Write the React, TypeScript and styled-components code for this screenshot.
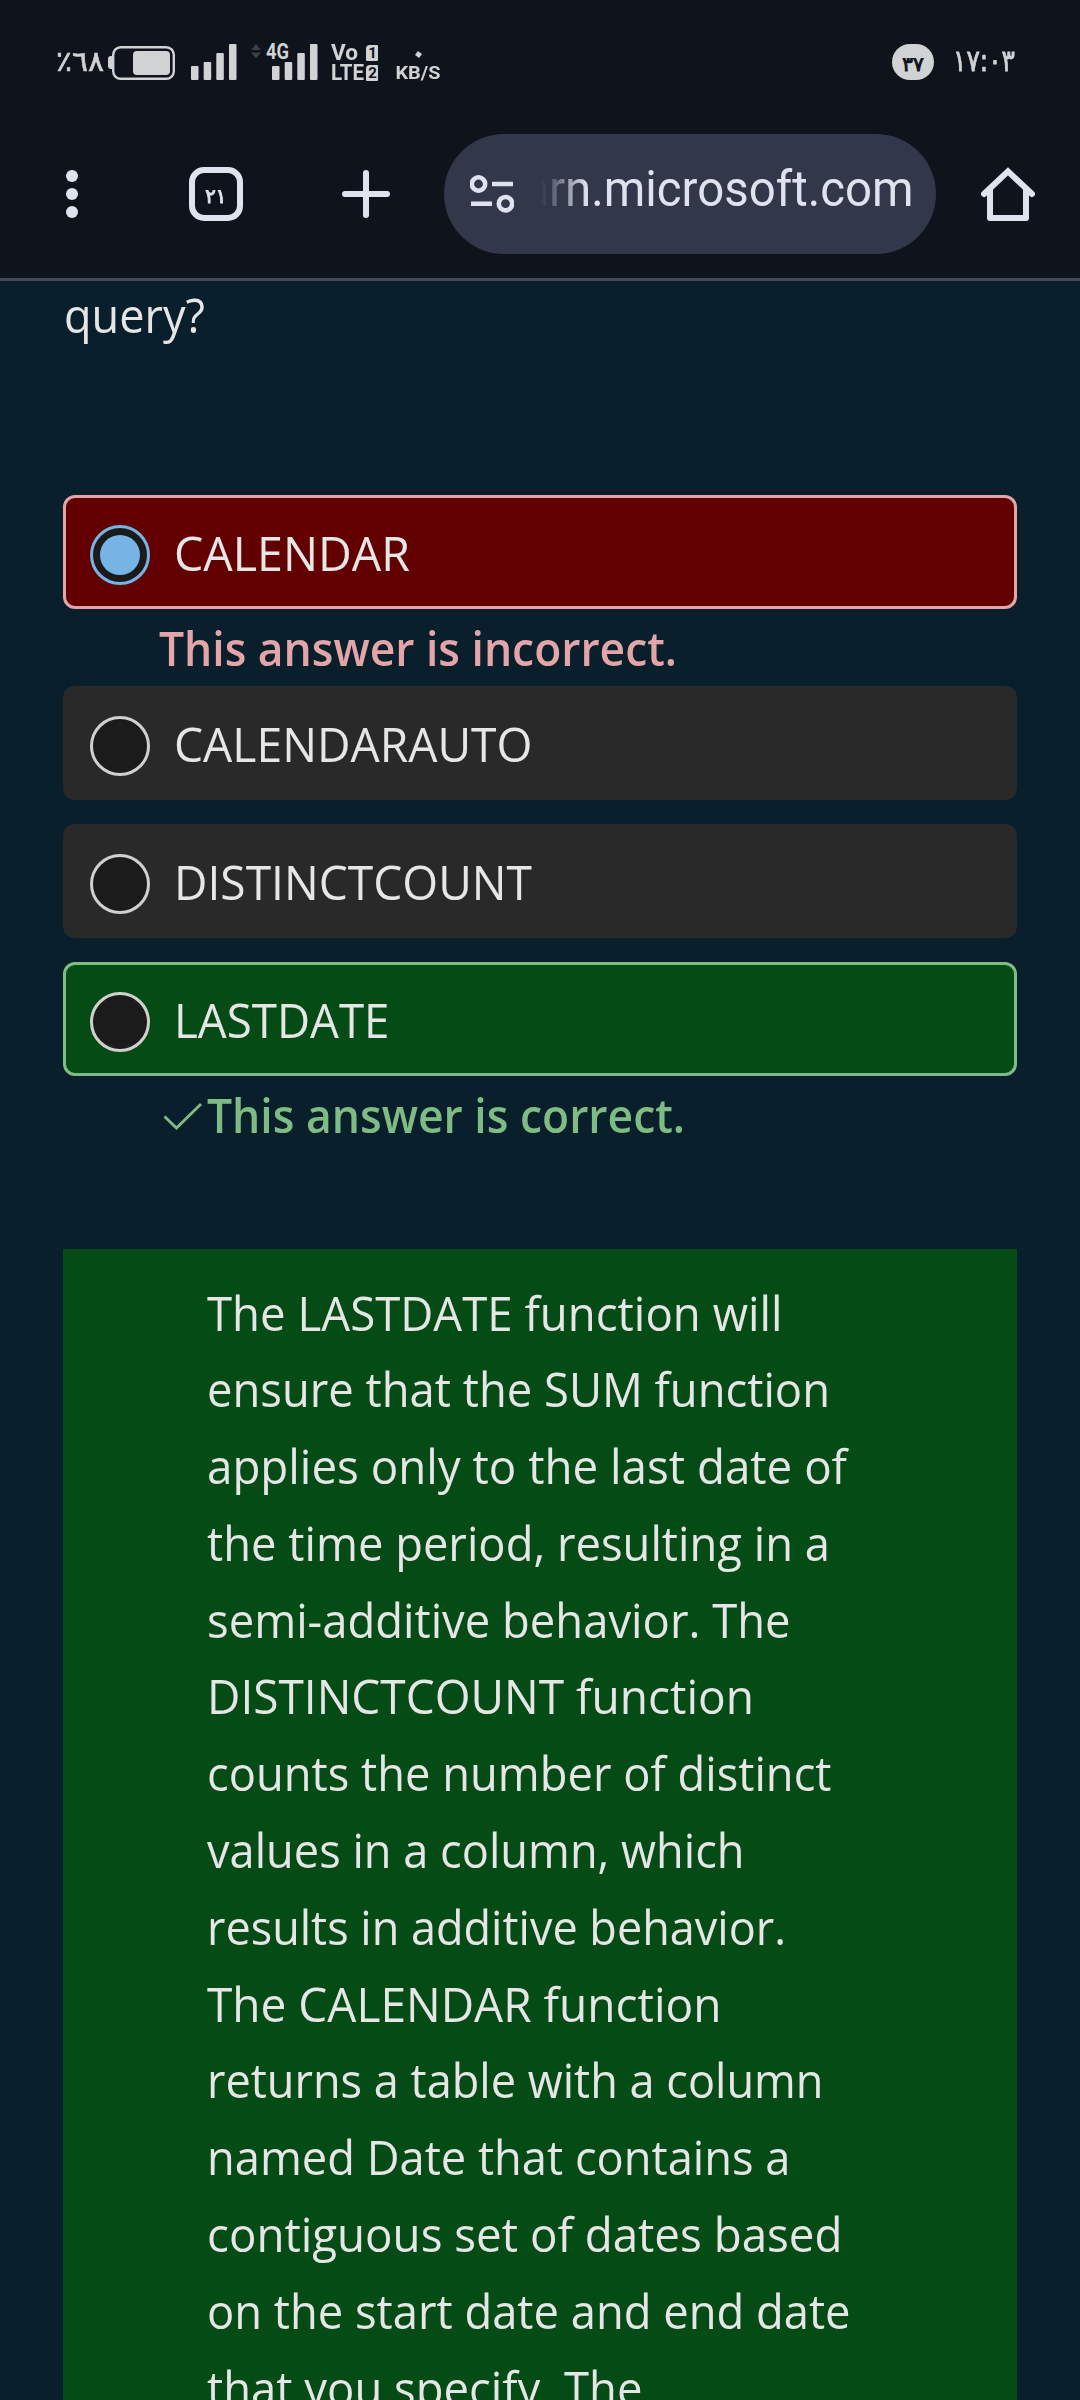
import React, { useLayoutEffect, useRef, useState } from "react";
import styled, { createGlobalStyle } from "styled-components";

const GlobalStyle = createGlobalStyle`
  html, body { margin: 0; padding: 0; background: #0a1f2c; }
  * { box-sizing: border-box; }
  svg { display: block; flex: none; }
`;

const ui = "#dfe2ef";
const status = "#d0d2d4";

const Screen = styled.div`
  width: 1080px;
  height: 2400px;
  overflow: hidden;
  background: #0a1f2c;
  color: #e6e6e6;
  font-family: "Open Sans", "Noto Sans", sans-serif;
  font-size: 47px;
  display: flex;
  flex-direction: column;
`;

const StatusBar = styled.header`
  flex: none;
  height: 124px;
  padding: 44px 65px 0 56px;
  background: #0f131b;
  color: ${status};
  display: flex;
  align-items: flex-start;
`;

const Digits = styled.span<{ $size: number; $color?: string; $stroke?: number }>`
  display: block;
  font-family: "DejaVu Sans", sans-serif;
  font-size: ${(p) => p.$size}px;
  line-height: 36px;
  color: ${(p) => p.$color ?? status};
  -webkit-text-stroke: ${(p) => p.$stroke ?? 0.6}px ${(p) => p.$color ?? status};
  direction: ltr;
  unicode-bidi: bidi-override;
  white-space: nowrap;
`;

const BatteryText = styled.div`
  width: 52px;
`;

const SignalGroup = styled.div`
  display: flex;
  flex: 1;
`;

const Volte = styled.div`
  margin-left: 13px;
  width: 46px;
  height: 37px;
  display: grid;
  grid-template-rows: 17px 17px;
  row-gap: 3px;
  font-family: Roboto, sans-serif;
  font-weight: 700;
  font-size: 22px;
  line-height: 17px;
`;

const VolteRow = styled.div`
  display: flex;
  justify-content: space-between;
  align-items: center;
`;

const SimBadge = styled.span`
  width: 12px;
  height: 16px;
  border-radius: 4px 1px 1px 1px;
  background: ${status};
  color: #0f131b;
  font-size: 15px;
  line-height: 16px;
  text-align: center;
`;

const Speed = styled.div`
  margin-left: 18px;
  width: 46px;
  display: flex;
  flex-direction: column;
  align-items: center;
  font-family: Roboto, sans-serif;
  font-weight: 700;
  font-size: 18.5px;
  line-height: 16px;
`;

const SpeedDot = styled.i`
  width: 5px;
  height: 5px;
  margin: 8px 0 8px;
  background: ${status};
  transform: rotate(35deg);
`;

const Notice = styled.div`
  width: 42px;
  height: 36px;
  border-radius: 18px;
  background: ${status};
  display: flex;
  justify-content: center;
  padding-top: 2px;
`;

const Clock = styled.div`
  margin-left: 19px;
  width: 62px;
  margin-top: -1px;
`;

const Toolbar = styled.nav`
  flex: none;
  height: 157px;
  padding: 10px 45px 0 66px;
  background: #0f131b;
  border-bottom: 3px solid #434a56;
  display: flex;
  align-items: flex-start;
`;

const Tool = styled.div<{ $w: number; $ml?: number }>`
  width: ${(p) => p.$w}px;
  height: 120px;
  margin-left: ${(p) => p.$ml ?? 0}px;
  display: flex;
  align-items: center;
  justify-content: center;
`;

const TabCount = styled.div`
  width: 54px;
  height: 54px;
  border: 6px solid ${ui};
  border-radius: 15px;
  display: flex;
  align-items: center;
  justify-content: center;
  padding-top: 3px;
`;

const Address = styled.div`
  margin-left: 54px;
  width: 492px;
  height: 120px;
  border-radius: 60px;
  background: #32374a;
  display: flex;
  align-items: center;
  padding-left: 26px;
`;

const Url = styled.div`
  margin-left: 27px;
  width: 373px;
  height: 76px;
  margin-top: -10px;
  overflow: hidden;
  display: flex;
  justify-content: flex-end;
  color: ${ui};
  font-family: Roboto, sans-serif;
  font-size: 50px;
  line-height: 76px;
  mask-image: linear-gradient(to right, transparent, #000 46px);
`;

const Content = styled.main`
  padding: 4px 63px 0;
  flex: 1;
`;

const Question = styled.p`
  margin: 0 0 150px;
  padding-left: 1px;
  line-height: 60px;
`;

const tones = {
  wrong: { bg: "#620000", line: "#e3a5a8" },
  right: { bg: "#054b16", line: "#7fbc83" },
  plain: { bg: "#292929", line: "#292929" },
};
type Tone = keyof typeof tones;

const Option = styled.div<{ $tone: Tone; $gap?: boolean }>`
  height: 114px;
  border: 3px solid ${(p) => tones[p.$tone].line};
  border-radius: 12px;
  background: ${(p) => tones[p.$tone].bg};
  padding: 27px 24px 0;
  margin-top: ${(p) => (p.$gap ? 24 : 0)}px;
  display: flex;
  gap: 24px;
`;

const Radio = styled.span<{ $on?: boolean }>`
  flex: none;
  width: 60px;
  height: 60px;
  border-radius: 50%;
  border: 3px solid ${(p) => (p.$on ? "#76b4e6" : "#d2d0ce")};
  background: #1b1b1b;
  display: flex;
  align-items: center;
  justify-content: center;
`;

const RadioDot = styled.span`
  width: 40px;
  height: 40px;
  border-radius: 50%;
  background: #76b4e6;
`;

const OptionLabel = styled.span`
  margin-top: -2px;
  line-height: 60px;
`;

const Feedback = styled.div<{ $tone: Tone }>`
  height: 77px;
  padding: 7px 0 0 96px;
  display: flex;
  font-weight: 600;
  line-height: 64px;
  color: ${(p) => tones[p.$tone].line};
`;

const Explanation = styled.section`
  margin-top: 96px;
  height: 1400px;
  padding: 25.500px 0 0 144px;
  background: #054b16;
  line-height: 76.8px;
`;

const Line = styled.div`
  height: 76.8px;
`;

const Run = styled.span`
  display: inline-block;
  white-space: nowrap;
  transform-origin: left center;
`;

/* Text condensed or widened horizontally to fill a set measure. */
function Fit({ width, children, origin }: { width: number; children: string; origin?: string }) {
  const ref = useRef<HTMLSpanElement>(null);
  const [scale, setScale] = useState(1);
  useLayoutEffect(() => {
    if (ref.current) setScale(width / parseFloat(getComputedStyle(ref.current).width));
  }, [width, children]);
  return (
    <Run ref={ref} style={{ transform: `scaleX(${scale})`, transformOrigin: origin }}>
      {children}
    </Run>
  );
}

const explanation: [string, number][] = [
  ["The LASTDATE function will", 575.5],
  ["ensure that the SUM function", 623],
  ["applies only to the last date of", 640],
  ["the time period, resulting in a", 623],
  ["semi-additive behavior. The", 583.5],
  ["DISTINCTCOUNT function", 547],
  ["counts the number of distinct", 624.5],
  ["values in a column, which", 537.5],
  ["results in additive behavior.", 579],
  ["The CALENDAR function", 514.5],
  ["returns a table with a column", 616.5],
  ["named Date that contains a", 583.5],
  ["contiguous set of dates based", 635.5],
  ["on the start date and end date", 643.5],
  ["that you specify. The", 435.5],
];

const Battery = () => (
  <svg width="68" height="36" viewBox="108 44 68 36">
    <path d="M112.500 56h-1.500a3 3 0 0 0-3 3v7a3 3 0 0 0 3 3h1.500z" fill={status} />
    <rect x="113.200" y="47.200" width="60.600" height="31.600" rx="7.500" fill="none" stroke={status} strokeWidth="2.400" />
    <rect x="133" y="51" width="37" height="24" rx="4" fill={status} />
  </svg>
);

const Bars = () => (
  <g fill={status}>
    <rect x="0" y="22" width="7.500" height="14" rx="1" />
    <rect x="12.700" y="18" width="7.500" height="18" rx="1" />
    <rect x="25.300" y="9" width="7.500" height="27" rx="1" />
    <rect x="38" y="0" width="7.500" height="36" rx="1" />
  </g>
);

const SignalIcon = styled.svg`
  margin-left: 15px;
`;

const Signal4GIcon = styled.svg`
  margin-left: 14px;
  overflow: visible;
`;

const Signal = () => (
  <SignalIcon width="46" height="36" viewBox="0 0 46 36">
    <Bars />
  </SignalIcon>
);

const Signal4G = () => (
  <Signal4GIcon width="67" height="36" viewBox="251 44 67 36">
    <path d="M251 50l5-6 5 6zM251 52.500l5 6 5-6z" fill="#3a3e45" />
    <g transform="translate(272 44)">
      <Bars />
    </g>
    <text x="266" y="59" fill={status} fontFamily="Roboto, sans-serif" fontWeight="700" fontSize="22" textLength="23" lengthAdjust="spacingAndGlyphs">4G</text>
  </Signal4GIcon>
);

export default function App() {
  return (
    <Screen>
      <GlobalStyle />
      <StatusBar>
        <SignalGroup>
          <BatteryText>
            <Digits $size={28}>
              <Fit width={48}>٪٦٨</Fit>
            </Digits>
          </BatteryText>
          <Battery />
          <Signal />
          <Signal4G />
          <Volte>
            <VolteRow>
              <Fit width={27}>Vo</Fit>
              <SimBadge>1</SimBadge>
            </VolteRow>
            <VolteRow>
              <Fit width={33}>LTE</Fit>
              <SimBadge>2</SimBadge>
            </VolteRow>
          </Volte>
          <Speed>
            <SpeedDot />
            <Fit width={45} origin="center">KB/S</Fit>
          </Speed>
        </SignalGroup>
        <Notice>
          <Digits $size={20} $color="#0f131b" $stroke={1}>٣٧</Digits>
        </Notice>
        <Clock>
          <Digits $size={30} $stroke={0.8}>
            <Fit width={62}>١٧:٠٣</Fit>
          </Digits>
        </Clock>
      </StatusBar>

      <Toolbar>
        <Tool $w={12}>
          <svg width="12" height="48" viewBox="0 0 12 48" fill={ui}>
            <circle cx="6" cy="6" r="6" />
            <circle cx="6" cy="24" r="6" />
            <circle cx="6" cy="42" r="6" />
          </svg>
        </Tool>
        <Tool $w={54} $ml={111}>
          <TabCount>
            <Digits $size={20} $color={ui} $stroke={1}>
              <Fit width={21} origin="center">٢١</Fit>
            </Digits>
          </TabCount>
        </Tool>
        <Tool $w={48} $ml={99}>
          <svg width="48" height="48" viewBox="0 0 48 48" stroke={ui} strokeWidth="6" strokeLinecap="round">
            <path d="M24 3v42M3 24h42" />
          </svg>
        </Tool>
        <Address>
          <svg width="44" height="40" viewBox="470 174 44 40" fill="none" stroke={ui} strokeWidth="4.600">
            <circle cx="478.500" cy="184" r="6.700" />
            <path d="M492 184h21M471 203.700h21" />
            <circle cx="505.500" cy="203.700" r="6.700" />
          </svg>
          <Url>
            <Fit width={427} origin="right center">learn.microsoft.com</Fit>
          </Url>
        </Address>
        <Tool $w={54} $ml={45}>
          <svg width="54" height="54" viewBox="0 0 54 54" fill="none" stroke={ui} strokeWidth="6">
            <path d="M3 27L27 4.300L51 27" strokeLinecap="round" />
            <path d="M9 21V51H45V21" strokeLinejoin="round" />
          </svg>
        </Tool>
      </Toolbar>

      <Content>
        <Question>
          <Fit width={141}>query?</Fit>
        </Question>

        <Option $tone="wrong">
          <Radio $on>
            <RadioDot />
          </Radio>
          <OptionLabel>
            <Fit width={236}>CALENDAR</Fit>
          </OptionLabel>
        </Option>
        <Feedback $tone="wrong">
          <Fit width={518}>This answer is incorrect.</Fit>
        </Feedback>
        <Option $tone="plain">
          <Radio />
          <OptionLabel>
            <Fit width={358.5}>CALENDARAUTO</Fit>
          </OptionLabel>
        </Option>
        <Option $tone="plain" $gap>
          <Radio />
          <OptionLabel>
            <Fit width={358}>DISTINCTCOUNT</Fit>
          </OptionLabel>
        </Option>
        <Option $tone="right" $gap>
          <Radio />
          <OptionLabel>
            <Fit width={215.5}>LASTDATE</Fit>
          </OptionLabel>
        </Option>
        <Feedback $tone="right">
          <svg width="48" height="64" viewBox="159 1083 48 64" fill="none" stroke={tones.right.line} strokeWidth="2.800">
            <path d="M164.500 1116.500L176.500 1128L201 1104" />
          </svg>
          <Fit width={478}>This answer is correct.</Fit>
        </Feedback>

        <Explanation>
          {explanation.map(([text, width]) => (
            <Line key={text}>
              <Fit width={width}>{text}</Fit>
            </Line>
          ))}
        </Explanation>
      </Content>
    </Screen>
  );
}
